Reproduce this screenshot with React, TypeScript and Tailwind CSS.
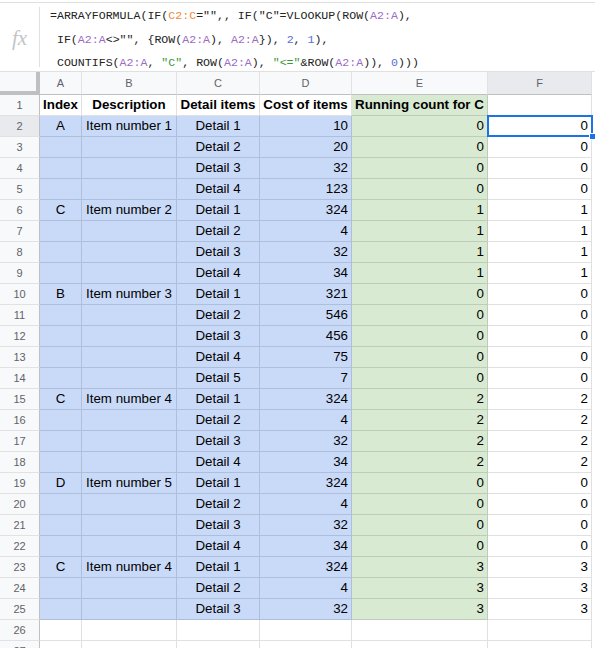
import React from "react";

type Tok = { t: string; c?: string };

const ORANGE = "text-[#f08a3a]";
const PURPLE = "text-[#9a6cc7]";
const GREEN = "text-[#3a9a3a]";
const NUM = "text-[#5571d6]";

// formula bar contents, one array per visual line
const formula: Tok[][] = [
  [
    { t: "=ARRAYFORMULA(IF(" },
    { t: "C2:C", c: ORANGE },
    { t: '="",, IF("C"=VLOOKUP(ROW(' },
    { t: "A2:A", c: PURPLE },
    { t: ")," },
  ],
  [
    { t: " IF(" },
    { t: "A2:A", c: PURPLE },
    { t: '<>"", {ROW(' },
    { t: "A2:A", c: PURPLE },
    { t: "), " },
    { t: "A2:A", c: PURPLE },
    { t: "}), " },
    { t: "2", c: NUM },
    { t: ", " },
    { t: "1", c: NUM },
    { t: ")," },
  ],
  [
    { t: " COUNTIFS(" },
    { t: "A2:A", c: PURPLE },
    { t: ", " },
    { t: '"C"', c: GREEN },
    { t: ", ROW(" },
    { t: "A2:A", c: PURPLE },
    { t: "), " },
    { t: '"<="', c: GREEN },
    { t: "&ROW(" },
    { t: "A2:A", c: PURPLE },
    { t: ")), " },
    { t: "0", c: NUM },
    { t: ")))" },
  ],
];

type Group = { idx: string; desc: string; costs: number[]; count: number };

const groups: Group[] = [
  { idx: "A", desc: "Item number 1", costs: [10, 20, 32, 123], count: 0 },
  { idx: "C", desc: "Item number 2", costs: [324, 4, 32, 34], count: 1 },
  { idx: "B", desc: "Item number 3", costs: [321, 546, 456, 75, 7], count: 0 },
  { idx: "C", desc: "Item number 4", costs: [324, 4, 32, 34], count: 2 },
  { idx: "D", desc: "Item number 5", costs: [324, 4, 32, 34], count: 0 },
  { idx: "C", desc: "Item number 4", costs: [324, 4, 32], count: 3 },
];

type Row = { a: string; b: string; c: string; d: string; e: string; f: string };

const rows: Row[] = groups.flatMap((g) =>
  g.costs.map((cost, i) => ({
    a: i === 0 ? g.idx : "",
    b: i === 0 ? g.desc : "",
    c: `Detail ${i + 1}`,
    d: String(cost),
    e: String(g.count),
    f: String(g.count),
  }))
);

const cols = ["A", "B", "C", "D", "E", "F"];
const gridCols = "grid grid-cols-[40px_42px_95px_83px_92px_136px_104px]";

const cell = "h-[21px] border-r border-b border-[#0000001f] px-[3px] flex items-center whitespace-nowrap overflow-hidden";
const rowHead = "h-[21px] border-r border-b border-[#c0c0c0] border-b-[#e2e2e2] flex items-center justify-center text-[11px] text-[#5f6368]";

export default function App() {
  return (
    <div className="w-[595px] h-[648px] overflow-hidden bg-white text-black font-['Liberation_Sans',Arial,sans-serif]">
      {/* formula bar */}
      <div className="mt-[2px] h-[69px] border-t border-[#e0e0e0] flex">
        <div className="w-[39px] shrink-0 flex items-center justify-center pt-[2px]">
          <span className="font-['Liberation_Serif',serif] italic text-[21px] text-[#c4c4c4] leading-none">
            fx
          </span>
        </div>
        <div className="w-px bg-[#e0e0e0] my-[4px]" />
        <div className="pl-[10px] pt-[1px] font-['Liberation_Mono',monospace] text-[11.6px] leading-[23.5px] text-[#222] whitespace-pre">
          {formula.map((line, i) => (
            <div key={i}>
              {line.map((tok, j) => (
                <span key={j} className={tok.c}>
                  {tok.t}
                </span>
              ))}
            </div>
          ))}
        </div>
      </div>

      {/* column headers */}
      <div className={`${gridCols} h-[24px] border-t border-[#e0e0e0] text-[11px] text-[#5f6368]`}>
        <div className="bg-[#f8f9fa] border-r-4 border-b-4 border-[#c0c0c0]" />
        {cols.map((c) => (
          <div
            key={c}
            className={`flex items-center justify-center border-r border-b border-[#c0c0c0] border-r-[#e2e2e2] ${
              c === "F" ? "bg-[#e8eaed]" : "bg-[#f8f9fa]"
            }`}
          >
            {c}
          </div>
        ))}
      </div>

      {/* sheet body */}
      <div className={`${gridCols} text-[13.33px]`}>
        <div className={`${rowHead} bg-[#f8f9fa]`}>1</div>
        <div className={`${cell} justify-center font-bold`}>Index</div>
        <div className={`${cell} justify-center font-bold`}>Description</div>
        <div className={`${cell} justify-center font-bold`}>Detail items</div>
        <div className={`${cell} justify-center font-bold`}>Cost of items</div>
        <div className={`${cell} bg-[#d9ead3] font-bold`}>Running count for C</div>
        <div className={cell} />

        {rows.map((r, i) => {
          const n = i + 2;
          return (
            <React.Fragment key={n}>
              <div className={`${rowHead} ${n === 2 ? "bg-[#e8eaed]" : "bg-[#f8f9fa]"}`}>{n}</div>
              <div className={`${cell} bg-[#c9daf8] justify-center`}>{r.a}</div>
              <div className={`${cell} bg-[#c9daf8] justify-center`}>{r.b}</div>
              <div className={`${cell} bg-[#c9daf8] justify-center`}>{r.c}</div>
              <div className={`${cell} bg-[#c9daf8] justify-end`}>{r.d}</div>
              <div className={`${cell} bg-[#d9ead3] justify-end`}>{r.e}</div>
              <div className={`${cell} justify-end ${n === 2 ? "relative overflow-visible" : ""}`}>
                {r.f}
                {n === 2 && (
                  <div className="absolute -left-px -top-px -right-[2px] -bottom-px border-2 border-[#1a73e8]">
                    <div className="absolute -right-[5px] -bottom-[5px] w-[7px] h-[7px] bg-[#1a73e8] border border-white" />
                  </div>
                )}
              </div>
            </React.Fragment>
          );
        })}

        {[26, 27].map((n) => (
          <React.Fragment key={n}>
            <div className={`${rowHead} bg-[#f8f9fa]`}>{n}</div>
            {cols.map((c) => (
              <div key={c} className={cell} />
            ))}
          </React.Fragment>
        ))}
      </div>
    </div>
  );
}
